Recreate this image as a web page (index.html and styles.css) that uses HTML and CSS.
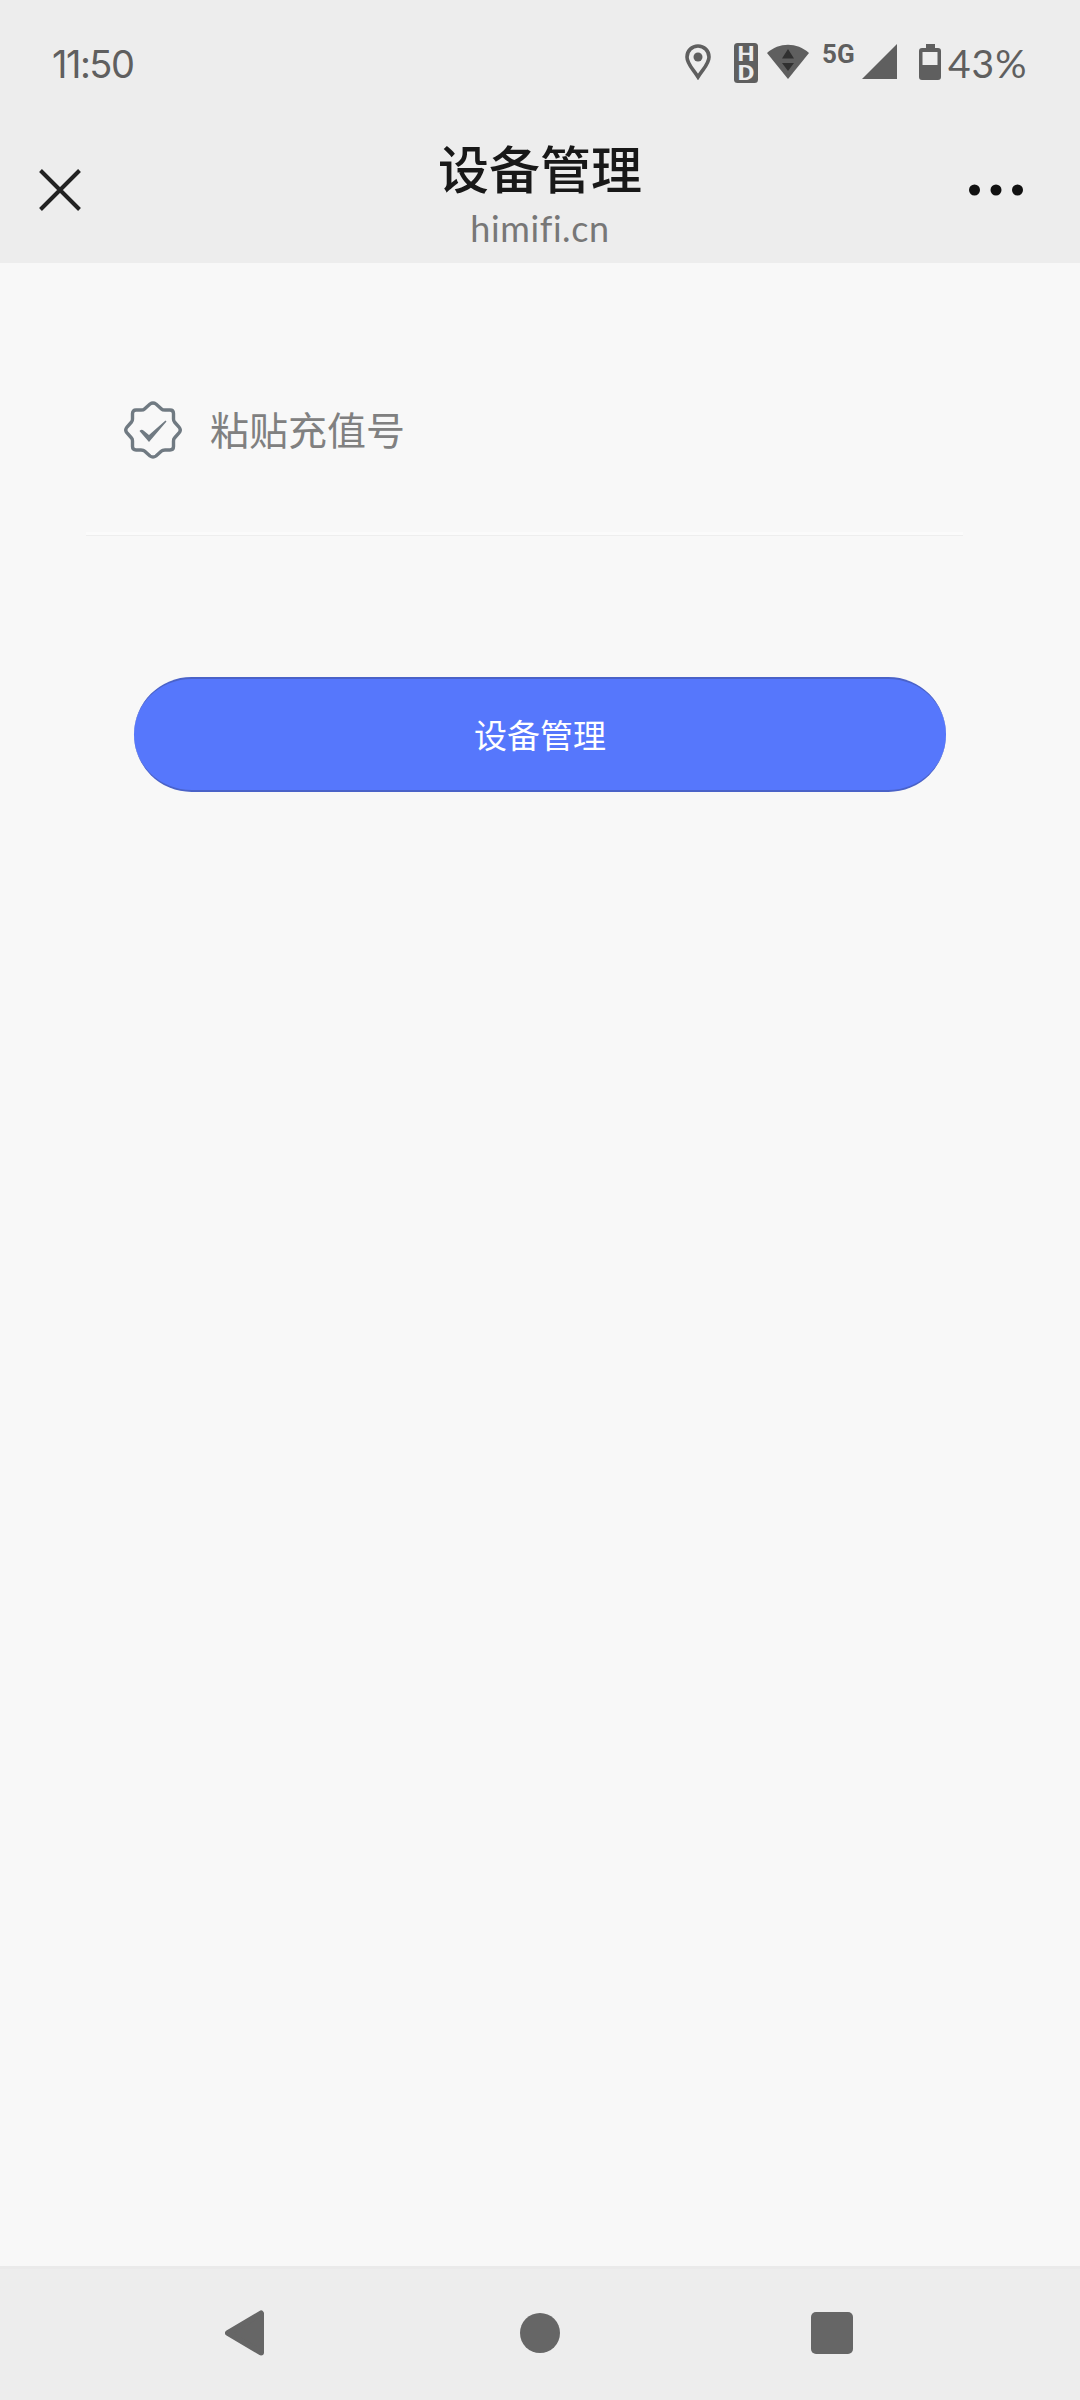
FILE: index.html
```html
<!DOCTYPE html>
<html lang="zh-CN">
<head>
    <meta charset="UTF-8">
    <meta name="viewport" content="width=device-width, initial-scale=1.0">
    <title>设备管理</title>
    <link rel="stylesheet" href="styles.css">
</head>
<body>
    <div class="status-bar">
        <span class="time">11:50</span>
        <div class="status-icons">
            <svg class="pin" width="26" height="36" viewBox="0 0 26 36">
                <path d="M13 2C7 2 2 6.700 2 13c0 7 6 12 11 20 5-8 11-13 11-20C24 6.700 19 2 13 2z" fill="none" stroke="#5f5f5f" stroke-width="3.600"/>
                <circle cx="13" cy="13" r="4.500" fill="#5f5f5f"/>
            </svg>
            <svg class="hd" width="24" height="40" viewBox="0 0 24 40">
                <rect width="24" height="40" rx="3.500" fill="#5f5f5f"/>
                <text x="12" y="18" textLength="17" lengthAdjust="spacingAndGlyphs">H</text>
                <text x="12" y="36.500" textLength="17" lengthAdjust="spacingAndGlyphs">D</text>
            </svg>
            <svg class="wifi" width="42" height="36" viewBox="0 0 42 36">
                <path d="M0 9C12-2 30-2 42 9L21 35z" fill="#5f5f5f"/>
                <path d="M21 5l6 9.500H15zM21 27l-6-8h12z" fill="#303030"/>
            </svg>
            <span class="network">5G</span>
            <svg class="signal" width="35" height="35" viewBox="0 0 35 35">
                <path d="M35 0v35H0z" fill="#5f5f5f"/>
            </svg>
            <svg class="battery" width="22" height="36" viewBox="0 0 22 36">
                <path d="M7 0h9v4h3q3 0 3 3v26q0 3-3 3H3q-3 0-3-3V7q0-3 3-3h4z" fill="#5f5f5f"/>
                <path d="M3.500 8h15v13h-15z" fill="#ededed"/>
            </svg>
            <span class="percent">43%</span>
        </div>
    </div>

    <div class="header">
        <svg class="close" width="42" height="42" viewBox="0 0 42 42">
            <path d="M1.500 1.500l39 39M40.500 1.500l-39 39" stroke="#222" stroke-width="4"/>
        </svg>
        <div class="header-title">
            <h1>设备管理</h1>
            <p>himifi.cn</p>
        </div>
        <svg class="more" width="54" height="12" viewBox="0 0 54 12">
            <circle cx="5.500" cy="6" r="5.500" fill="#111"/>
            <circle cx="27" cy="6" r="5.500" fill="#111"/>
            <circle cx="48.500" cy="6" r="5.500" fill="#111"/>
        </svg>
    </div>

    <div class="content">
        <div class="field">
            <svg width="58" height="58" viewBox="0 0 58 58">
                <path d="M26 3Q29 .8 32 3L37.500 8Q38.500 9 41 9H46Q49.500 9 49.500 12.500V18Q49.500 20 50.500 21L55 26Q57.500 29 55 32L50.500 37Q49.500 38 49.500 40V45.500Q49.500 49 46 49H41Q38.500 49 37.500 50L32 55Q29 57.200 26 55L20.500 50Q19.500 49 17 49H12Q8.500 49 8.500 45.500V40Q8.500 38 7.500 37L3 32Q.5 29 3 26L7.500 21Q8.500 20 8.500 18V12.500Q8.500 9 12 9H17Q19.500 9 20.500 8z" fill="none" stroke="#707a82" stroke-width="3.400"/>
                <path d="M15.500 30q2-2 4-.5L25 34 41.500 19.500 42.500 20.500 25 41z" fill="#707a82"/>
            </svg>
            <input type="text" placeholder="粘贴充值号">
        </div>
        <button class="submit">设备管理</button>
    </div>

    <div class="nav-bar">
        <svg width="39" height="46" viewBox="0 0 39 46">
            <path d="M3 23L36 3.500v39z" fill="#666" stroke="#666" stroke-width="6" stroke-linejoin="round"/>
        </svg>
        <div class="home"></div>
        <div class="recent"></div>
    </div>
</body>
</html>
```

FILE: styles.css
```css
* {
    box-sizing: border-box;
}

body {
    display: flex;
    flex-direction: column;
    height: 2400px;
    margin: 0;
    background-color: #f8f8f8;
    font-family: 'Noto Sans CJK SC', sans-serif;
}

svg {
    display: block;
    flex-shrink: 0;
}

.status-bar {
    display: flex;
    justify-content: space-between;
    height: 126px;
    padding: 43px 54px 0 52px;
    background-color: #ededed;
    color: #5f5f5f;
    font-family: Lato, sans-serif;
}

.time,
.percent {
    font-size: 39px;
    line-height: 41px;
}

.time {
    font-family: Inter, sans-serif;
    font-size: 38px;
    line-height: 43px;
    letter-spacing: -1.5px;
}

.status-icons {
    display: flex;
    align-items: flex-start;
}

.pin {
    margin: 1px 23px 0 0;
}

.hd {
    margin-right: 9px;
}

.hd text {
    fill: #ededed;
    font-family: Roboto, sans-serif;
    font-size: 20px;
    font-weight: 700;
    text-anchor: middle;
}

.wifi {
    margin: 1px 13px 0 0;
}

.network {
    width: 40px;
    font-family: Roboto, sans-serif;
    font-size: 26px;
    font-weight: 700;
    line-height: 23px;
}

.signal {
    margin: 1px 22px 0 0;
}

.battery {
    margin: 1px 7px 0 0;
}

.percent {
    width: 78px;
    letter-spacing: 1px;
}

.header {
    display: flex;
    align-items: center;
    justify-content: space-between;
    height: 137px;
    padding: 0 57px 0 39px;
    background-color: #ededed;
}

.close {
    margin-top: -10px;
}

.more {
    margin-top: -10px;
}

.header-title {
    padding-left: 30px;
    text-align: center;
}

.header-title h1 {
    margin: 0;
    color: #181818;
    font-size: 51px;
    font-weight: 500;
    line-height: 62px;
}

.header-title p {
    margin: 0;
    padding-top: 4px;
    color: #777;
    font-family: Lato, sans-serif;
    font-size: 36px;
    line-height: 52px;
    letter-spacing: 0.6px;
    font-variant-ligatures: none;
}

.content {
    flex: 1;
    padding: 68px 117px 0 86px;
}

.field {
    display: flex;
    align-items: center;
    height: 205px;
    padding: 0 0 7px 38px;
    border-bottom: 1px solid #eee;
    box-shadow: inset 0 -3px 0 #fbfbfb;
}

.field input {
    width: 600px;
    margin: 0 0 3px 28px;
    padding: 0;
    border: none;
    outline: none;
    background: none;
    font-family: inherit;
    font-size: 39px;
}

.field input::placeholder {
    color: #808080;
}

.submit {
    display: block;
    width: 812px;
    height: 115px;
    margin: 141px 0 0 48px;
    padding: 0 0 2px;
    border: 2px solid #4a62c8;
    border-width: 2px 0;
    border-radius: 58px;
    background-color: #5677fc;
    color: white;
    font-family: inherit;
    font-size: 33px;
}

.nav-bar {
    display: flex;
    align-items: center;
    justify-content: space-between;
    height: 134px;
    padding: 0 227px 4px 225px;
    border-top: 3px solid #eaeaea;
    background-color: #ededed;
}

.home {
    width: 40px;
    height: 40px;
    margin-left: 4px;
    border-radius: 50%;
    background-color: #666;
}

.recent {
    width: 42px;
    height: 42px;
    border-radius: 5px;
    background-color: #666;
}
```
